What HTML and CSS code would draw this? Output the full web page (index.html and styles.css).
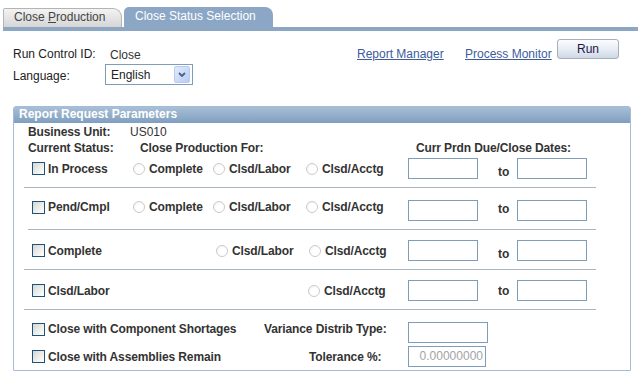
FILE: index.html
```html
<!DOCTYPE html>
<html>
<head>
<meta charset="utf-8">
<link rel="stylesheet" href="styles.css">
</head>
<body>
<div class="tabbar">
  <div class="tab tab-off">Close <u>P</u>roduction</div>
  <div class="tab tab-on">Close Status Selection</div>
</div>

<div class="runbar">
  <span class="lbl w-rc">Run Control ID:</span>
  <span class="val w-close">Close</span>
  <a class="link w-rm">Report Manager</a>
  <a class="link w-pm">Process Monitor</a>
  <button class="run">Run</button>
</div>

<div class="langrow">
  <span class="lbl w-lang">Language:</span>
  <div class="select">
    <span class="select-val">English</span>
    <span class="drop"><svg width="8" height="6" viewBox="0 0 8 6"><path d="M1 1 L4 4 L7 1" stroke="#4a5f86" stroke-width="1.8" fill="none"/></svg></span>
  </div>
</div>

<div class="group">
  <div class="group-hd">Report Request Parameters</div>
  <div class="group-bd">
    <div class="inforow bu"><span class="lbl w-bu">Business Unit:</span><span class="val">US010</span></div>
    <div class="inforow cs"><span class="lbl w-cs">Current Status:</span><span class="lbl w-cpf">Close Production For:</span><span class="lbl">Curr Prdn Due/Close Dates:</span></div>

    <div class="srow r1">
      <label class="chk"><span class="box"></span>In Process</label>
      <label class="opt"><span class="radio"></span>Complete</label>
      <label class="opt"><span class="radio"></span>Clsd/Labor</label>
      <label class="opt"><span class="radio"></span>Clsd/Acctg</label>
      <span class="txt"></span>
      <span class="to">to</span>
      <span class="txt"></span>
    </div>
    <div class="sep"></div>

    <div class="srow r2">
      <label class="chk"><span class="box"></span>Pend/Cmpl</label>
      <label class="opt"><span class="radio"></span>Complete</label>
      <label class="opt"><span class="radio"></span>Clsd/Labor</label>
      <label class="opt"><span class="radio"></span>Clsd/Acctg</label>
      <span class="txt"></span>
      <span class="to">to</span>
      <span class="txt"></span>
    </div>
    <div class="sep sep-narrow"></div>

    <div class="srow r3">
      <label class="chk"><span class="box"></span>Complete</label>
      <span></span>
      <label class="opt"><span class="radio"></span>Clsd/Labor</label>
      <label class="opt"><span class="radio"></span>Clsd/Acctg</label>
      <span class="txt"></span>
      <span class="to">to</span>
      <span class="txt"></span>
    </div>
    <div class="sep"></div>

    <div class="srow r4">
      <label class="chk"><span class="box"></span>Clsd/Labor</label>
      <span></span>
      <span></span>
      <label class="opt"><span class="radio"></span>Clsd/Acctg</label>
      <span class="txt"></span>
      <span class="to">to</span>
      <span class="txt"></span>
    </div>
    <div class="sep"></div>

    <div class="xrow r5">
      <label class="chk"><span class="box"></span>Close with Component Shortages</label>
      <span class="lbl">Variance Distrib Type:</span>
      <span class="txt txt-wide"></span>
    </div>
    <div class="xrow r6">
      <label class="chk"><span class="box"></span>Close with Assemblies Remain</label>
      <span class="lbl tol">Tolerance %:</span>
      <span class="txt txt-num">0.00000000</span>
    </div>
  </div>
</div>
</body>
</html>
```

FILE: styles.css
```css
body {
  margin: 0;
  font-family: "Liberation Sans", Arial, sans-serif;
  font-size: 12px;
  color: #333;
  background: #fff;
}

/* Tabs */
.tabbar {
  display: flex;
  align-items: flex-end;
  height: 27px;
  margin-left: 3px;
  border-bottom: 4px solid #8ba7c3;
}
.tab {
  box-sizing: border-box;
  white-space: nowrap;
}
.tab-off {
  width: 119px;
  height: 19px;
  padding-left: 10px;
  line-height: 16px;
  background: linear-gradient(#f3f3f3, #d5d5d5);
  border: 1px solid #b4b4b4;
  border-bottom: none;
  border-radius: 2px 9px 0 0;
  color: #444;
}
.tab-on {
  width: 149px;
  height: 20px;
  margin-left: 2px;
  padding: 1px 0 0 11px;
  line-height: 17px;
  background: #8ba7c5;
  border-radius: 5px 8px 0 0;
  color: #fff;
}

/* Run control bar */
.runbar {
  display: flex;
  align-items: flex-end;
  height: 22px;
  margin: 8px 0 0 13px;
}
.lbl {
  font-weight: bold;
  line-height: 14px;
  letter-spacing: -0.12px;
  white-space: nowrap;
}
.runbar .lbl,
.langrow .lbl {
  font-weight: normal;
  letter-spacing: 0;
  color: #222;
}
.val {
  line-height: 14px;
  white-space: nowrap;
}
.w-rc { width: 97px; }
.w-close { width: 247px; margin-bottom: -1px; }
.w-rm { width: 108px; }
.w-pm { width: 92px; }
.link {
  color: #3d5c9c;
  text-decoration: underline;
  line-height: 14px;
  white-space: nowrap;
}
.run {
  align-self: flex-start;
  width: 62px;
  height: 20px;
  padding: 0;
  font-family: inherit;
  font-size: 12px;
  color: #1c1646;
  background: linear-gradient(#fbfcfd, #e8edf4 50%, #cfd8e5);
  border: 1px solid #a7afbd;
  border-radius: 3px;
}

/* Language */
.langrow {
  display: flex;
  align-items: flex-end;
  height: 21px;
  margin: 3px 0 0 13px;
}
.w-lang { width: 92px; padding-bottom: 2px; }
.select {
  align-self: stretch;
  box-sizing: border-box;
  width: 88px;
  border: 1px solid #7f9db9;
  background: #fff;
  display: flex;
  align-items: center;
  padding: 1px;
}
.select-val {
  flex: 1;
  padding-left: 4px;
  color: #222;
}
.drop {
  box-sizing: border-box;
  width: 16px;
  height: 17px;
  margin-right: 1px;
  border: 1px solid #b8cbf2;
  border-radius: 2px;
  background: linear-gradient(135deg, #e3ebfc, #b8ccf4);
  display: flex;
  align-items: center;
  justify-content: center;
}

/* Group box */
.group {
  margin: 21px 0 0 13px;
  width: 618px;
  box-sizing: border-box;
  border: 1px solid #a3bcd8;
  border-radius: 3px 3px 0 0;
}
.group-hd {
  height: 16px;
  line-height: 14px;
  padding-left: 5px;
  background: linear-gradient(#a8bfd7, #7f9ebf);
  color: #fff;
  font-weight: bold;
  white-space: nowrap;
}
.group-bd {
  padding: 2px 0 3px 0;
}
.inforow {
  display: flex;
  height: 15px;
  padding-left: 14px;
}
.inforow .lbl, .inforow .val { line-height: 15px; }
.bu { margin-bottom: 1px; }
.w-bu { width: 102px; }
.w-cs { width: 112px; }
.w-cpf { width: 276px; }

/* Status rows */
.srow {
  display: grid;
  grid-template-columns: 100px 80px 93px 103px 70px 39px 70px;
  grid-auto-rows: 21px;
  align-items: center;
  padding: 0 0 8px 18px;
}
.r1 { padding-top: 2px; }
.r2 { padding-top: 12px; }
.r3, .r4 { padding-top: 10px; }

.chk {
  display: flex;
  align-items: center;
  gap: 3px;
  font-weight: bold;
  line-height: 14px;
  letter-spacing: -0.12px;
  white-space: nowrap;
}
.box {
  flex: none;
  width: 13px;
  height: 13px;
  box-sizing: border-box;
  border: 1px solid #1c5180;
  background: linear-gradient(135deg, #d6d6d0, #f4f4f2 70%, #fff);
}
.opt {
  display: flex;
  align-items: center;
  gap: 4px;
  padding-left: 1px;
  font-weight: bold;
  line-height: 14px;
  letter-spacing: -0.12px;
  white-space: nowrap;
}
.r3 .opt { padding-left: 4px; }
.r4 .opt { padding-left: 3px; }
.radio {
  flex: none;
  width: 12px;
  height: 12px;
  box-sizing: border-box;
  border: 1px solid #cbcbcb;
  border-radius: 50%;
  background: radial-gradient(circle at 60% 60%, #fff 45%, #ebebeb);
}
.txt {
  box-sizing: border-box;
  width: 70px;
  height: 21px;
  border: 1px solid #7f9db9;
  background: #fff;
}
.to {
  padding-left: 20px;
  font-weight: bold;
  line-height: 14px;
}
.r1 .to, .r3 .to { align-self: end; }
.r2 .to { align-self: start; margin-top: 2px; }
.r2 .chk, .r2 .opt { align-self: start; }

.sep {
  height: 1px;
  width: 572px;
  margin-left: 10px;
  background: #a9b4c3;
}
.sep-narrow {
  width: 568px;
  margin-left: 14px;
}

/* Extra rows */
.xrow {
  display: grid;
  grid-template-columns: 232px 144px 80px;
  grid-auto-rows: 21px;
  align-items: center;
  padding-left: 18px;
}
.r5 { padding-top: 12px; }
.r5 .chk, .r5 .lbl { align-self: start; }
.r6 { padding-top: 3px; }
.tol { padding-left: 45px; }
.txt-wide { width: 80px; }
.txt-num {
  width: 78px;
  padding-right: 2px;
  text-align: right;
  line-height: 19px;
  color: #a3a3a3;
}
```
